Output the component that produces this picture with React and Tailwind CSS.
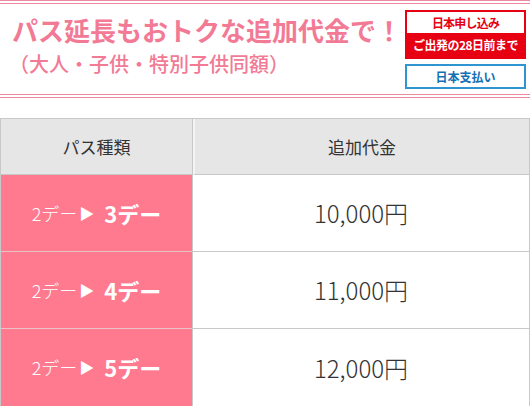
const rows = [
  { to: "3", price: "10,000円" },
  { to: "4", price: "11,000円" },
  { to: "5", price: "12,000円" },
];

const font = { fontFamily: '"Noto Sans CJK JP", "Noto Sans", sans-serif' };

export default function App() {
  return (
    <div className="w-[530px] h-[406px] bg-white overflow-hidden" style={font}>
      <div className="h-[98px] border-y-4 border-double border-[#ec8aa2] flex justify-between">
        <div className="pl-[12px] pt-[8px]">
          <h1 className="text-[26px] leading-[36px] font-bold text-[#f27a95]">
            パス延長もおトクな追加代金で！
          </h1>
          <p className="text-[20px] leading-[28px] font-medium text-[#f27a95] -ml-[3px] mt-[2px]">
            （大人・子供・特別子供同額）
          </p>
        </div>
        <div className="w-[121px] mr-[4px] pt-[6px] flex flex-col gap-[5px]">
          <div className="border-2 border-[#e60012]">
            <div className="h-[21px] flex items-center justify-center text-[12px] font-bold text-[#e60012] tracking-[-0.8px]">
              日本申し込み
            </div>
            <div className="h-[24px] bg-[#e60012] flex items-center justify-center text-[12px] font-bold text-white tracking-[-0.5px]">
              ご出発の28日前まで
            </div>
          </div>
          <div className="h-[25px] border-2 border-[#2f95d0] flex items-center justify-center text-[12px] font-bold text-[#1470b4]">
            日本支払い
          </div>
        </div>
      </div>

      <div className="mt-[20px] border border-[#c8c8c8] grid grid-cols-[192px_1fr]">
        <div className="h-[56px] bg-[#e6e6e6] border-r border-b border-[#c8c8c8] flex items-center justify-center text-[17px] text-[#333]">
          パス種類
        </div>
        <div className="h-[56px] bg-[#e6e6e6] border-b border-[#c8c8c8] border-l-2 border-l-[#f4f4f4] flex items-center justify-center text-[17px] text-[#333]">
          追加代金
        </div>
        {rows.map((r, i) => (
          <div key={r.to} className="contents">
            <div className={`h-[77px] bg-[#ff7a8f] border-r border-[#c8c8c8] flex items-center justify-center text-white ${i < 2 ? "border-b border-b-[#e9c1c8]" : ""}`}>
              <span className="text-[18px] font-light">2デー</span>
              <span className="text-[15px] ml-[2px] mr-[10px]">▶</span>
              <span className="text-[22px] font-bold">{r.to}デー</span>
            </div>
            <div className={`h-[77px] flex items-center justify-center text-[24px] text-[#333] font-light ${i < 2 ? "border-b border-[#c8c8c8]" : ""}`}>
              {r.price}
            </div>
          </div>
        ))}
      </div>
    </div>
  );
}
